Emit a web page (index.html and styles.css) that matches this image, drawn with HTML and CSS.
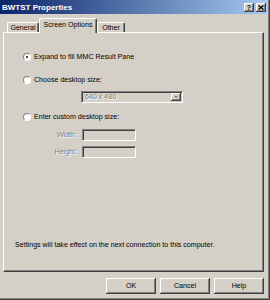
FILE: index.html
```html
<!DOCTYPE html>
<html>
<head>
<meta charset="utf-8">
<link rel="stylesheet" href="styles.css">
</head>
<body>
<div class="window">
  <div class="titlebar">
    <span class="title">BWTST Properties</span>
    <div class="tb-buttons">
      <span class="tb-btn help">?</span>
      <span class="tb-btn close"><svg width="6" height="5" viewBox="0 0 6 5"><path d="M0.5 0.5 L5.5 4.5 M5.5 0.5 L0.5 4.5" stroke="#000" stroke-width="1.3"/></svg></span>
    </div>
  </div>
  <div class="body">
    <div class="tabs">
      <div class="tab t-general">General</div>
      <div class="tab selected">Screen Options</div>
      <div class="tab t-other">Other</div>
    </div>
    <div class="panel">
      <div class="opt r1"><span class="radio checked"></span><span>Expand to fill MMC Result Pane</span></div>
      <div class="opt r2"><span class="radio"></span><span>Choose desktop size:</span></div>
      <div class="combo"><span class="disabled">640 x 480</span><span class="dd"><span class="arrow"></span></span></div>
      <div class="opt r3"><span class="radio"></span><span>Enter custom desktop size:</span></div>
      <div class="field f-width"><span class="flabel disabled">Width:</span><span class="input"></span></div>
      <div class="field f-height"><span class="flabel disabled">Height:</span><span class="input"></span></div>
      <div class="note">Settings will take effect on the next connection to this computer.</div>
    </div>
    <div class="buttons">
      <button class="btn">OK</button>
      <button class="btn">Cancel</button>
      <button class="btn">Help</button>
    </div>
  </div>
</div>
</body>
</html>
```
FILE: styles.css
```css
* { box-sizing: border-box; }
body {
  margin: 0;
  background: #d4d0c8;
  font-family: "Liberation Sans", Arial, sans-serif;
  font-size: 7.1px;
  color: #000;
}
.window {
  width: 270px;
  height: 300px;
  background: #d4d0c8;
  box-shadow: inset -1px -1px #404040, inset -2px -2px #808080;
  padding-right: 2px;
  display: flex;
  flex-direction: column;
}
.titlebar {
  height: 14px;
  background: linear-gradient(to right, #0a246a, #a6caf0);
  display: flex;
  align-items: center;
  justify-content: space-between;
  padding: 0 2px 0 2px;
  color: #fff;
  font-weight: bold;
  font-size: 8px;
}
.tb-buttons { display: flex; gap: 2px; }
.tb-btn {
  width: 10px;
  height: 9px;
  background: #d4d0c8;
  box-shadow: inset -1px -1px #404040, inset 1px 1px #fff, inset -2px -2px #808080;
  display: flex;
  align-items: center;
  justify-content: center;
  color: #000;
  font-size: 7px;
  line-height: 1;
}
.body {
  padding: 4px 4px 0 3px;
  flex: 1;
  display: flex;
  flex-direction: column;
}
.tabs {
  display: flex;
  align-items: flex-end;
  height: 15px;
  margin-left: 4px;
  margin-bottom: -1px;
  position: relative;
  z-index: 1;
}
.tab {
  height: 10px;
  margin-bottom: 1px;
  border: 1px solid;
  border-color: #fff #404040 transparent #fff;
  border-bottom: none;
  border-radius: 2px 2px 0 0;
  box-shadow: inset -1px 0 #808080;
  display: flex;
  align-items: center;
  justify-content: center;
  background: #d4d0c8;
}
.t-general { width: 32px; }
.t-other { width: 28px; }
.tab.selected {
  width: 58px;
  height: 15px;
  margin-bottom: 0;
  padding-bottom: 2px;
}
.panel {
  height: 240px;
  background: #d4d0c8;
  border: 1px solid;
  border-color: #fff #404040 #404040 #fff;
  box-shadow: inset -1px -1px #808080;
  display: flex;
  flex-direction: column;
  padding: 19px 0 0 19px;
}
.opt {
  display: flex;
  align-items: center;
  height: 10px;
  gap: 3px;
}
.r2 { margin-top: 13px; }
.r3 { margin-top: 9px; }
.radio {
  width: 8px;
  height: 8px;
  border-radius: 50%;
  background: #fff;
  border: 1px solid;
  border-color: #808080 #fff #fff #808080;
  display: flex;
  align-items: center;
  justify-content: center;
}
.radio.checked::after {
  content: "";
  width: 2px;
  height: 2px;
  border-radius: 50%;
  background: #000;
}
.disabled {
  color: #808080;
  text-shadow: 1px 1px #fff;
}
.combo {
  margin-top: 6px;
  margin-left: 58px;
  width: 102px;
  height: 12px;
  border: 1px solid;
  border-color: #808080 #fff #fff #808080;
  box-shadow: inset 1px 1px #404040;
  display: flex;
  align-items: center;
  justify-content: space-between;
  padding: 0 1px 0 3px;
}
.dd {
  width: 10px;
  height: 8px;
  background: #d4d0c8;
  box-shadow: inset -1px -1px #404040, inset 1px 1px #fff, inset -2px -2px #808080;
  display: flex;
  align-items: center;
  justify-content: center;
}
.arrow {
  width: 0;
  height: 0;
  border-left: 2px solid transparent;
  border-right: 2px solid transparent;
  border-top: 2px solid #808080;
}
.field {
  display: flex;
  align-items: center;
  height: 12px;
  gap: 5px;
}
.f-width { margin-top: 7px; }
.f-height { margin-top: 5px; }
.flabel {
  width: 54px;
  text-align: right;
}
.input {
  width: 54px;
  height: 12px;
  border: 1px solid;
  border-color: #808080 #fff #fff #808080;
  box-shadow: inset 1px 1px #404040;
}
.note {
  margin-top: 82px;
  margin-left: -8px;
  height: 10px;
  line-height: 10px;
}
.buttons {
  display: flex;
  justify-content: flex-end;
  gap: 4px;
  margin-top: 6px;
}
.btn {
  width: 50px;
  height: 16px;
  margin: 0;
  padding: 0;
  border: none;
  background: #d4d0c8;
  box-shadow: inset -1px -1px #404040, inset 1px 1px #fff, inset -2px -2px #808080;
  font: inherit;
  color: #000;
  display: flex;
  align-items: center;
  justify-content: center;
}
```
